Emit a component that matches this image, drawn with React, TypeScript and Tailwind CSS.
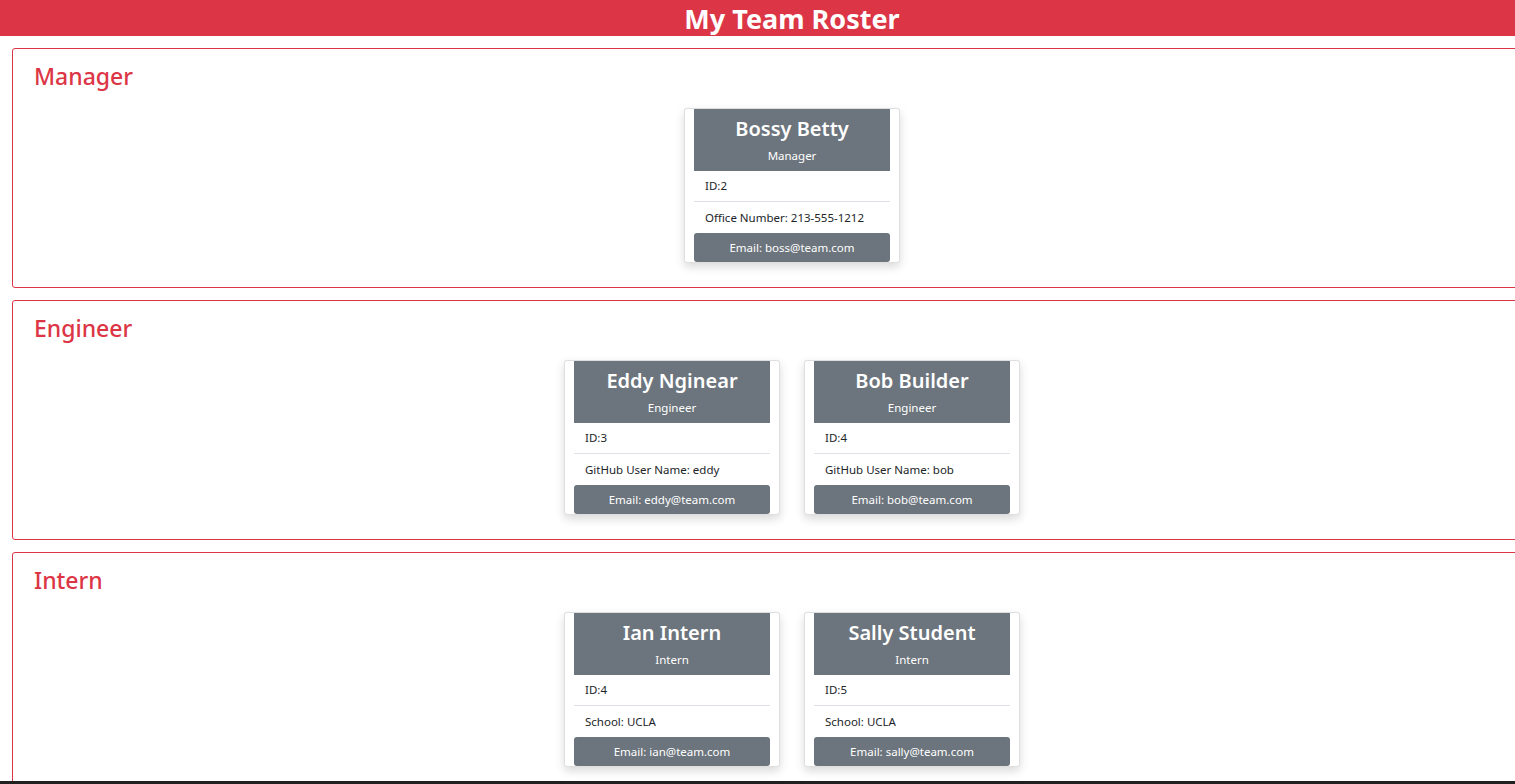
import React from "react";

type Member = { name: string; role: string; id: number; extra: string; email: string };

const sections: { title: string; members: Member[] }[] = [
  {
    title: "Manager",
    members: [{ name: "Bossy Betty", role: "Manager", id: 2, extra: "Office Number: 213-555-1212", email: "boss@team.com" }],
  },
  {
    title: "Engineer",
    members: [
      { name: "Eddy Nginear", role: "Engineer", id: 3, extra: "GitHub User Name: eddy", email: "eddy@team.com" },
      { name: "Bob Builder", role: "Engineer", id: 4, extra: "GitHub User Name: bob", email: "bob@team.com" },
    ],
  },
  {
    title: "Intern",
    members: [
      { name: "Ian Intern", role: "Intern", id: 4, extra: "School: UCLA", email: "ian@team.com" },
      { name: "Sally Student", role: "Intern", id: 5, extra: "School: UCLA", email: "sally@team.com" },
    ],
  },
];

function Card({ m }: { m: Member }) {
  return (
    <div className="w-[216px] bg-white border border-[rgba(0,0,0,0.125)] rounded-[3px] px-[9px] shadow-[0_4px_10px_rgba(0,0,0,0.15)]">
      <div className="bg-[#6c757d] h-[62px] flex flex-col items-center text-white">
        <div className="text-[20px] font-semibold leading-[26px] mt-[7px]">{m.name}</div>
        <div className="text-[11.5px] leading-[16px] mt-[6px]">{m.role}</div>
      </div>
      <div className="h-[31px] flex items-center pl-[11px] text-[11.5px] text-[#212529] border-b border-[#dee2e6]">ID:{m.id}</div>
      <div className="h-[31px] flex items-center pl-[11px] text-[11.5px] text-[#212529]">{m.extra}</div>
      <div className="h-[29px] bg-[#6c757d] rounded-[3px] flex items-center justify-center text-white text-[11.5px]">
        Email: {m.email}
      </div>
    </div>
  );
}

export default function App() {
  return (
    <div
      className="w-screen h-screen overflow-hidden bg-white"
      style={{ fontFamily: '"Segoe UI", "Noto Sans", "Open Sans", sans-serif' }}
    >
      <div className="w-[1584px]">
        <header className="h-[36px] bg-[#dc3545] flex items-center justify-center">
          <h1 className="text-white text-[27px] font-bold leading-none">My Team Roster</h1>
        </header>
        <div className="flex flex-col gap-[12px] mx-[12px] mt-[12px]">
          {sections.map((s) => (
            <section key={s.title} className="h-[240px] border border-[#dc3545] rounded-[3px] px-[21px] pt-[13px]">
              <h2 className="text-[#dc3545] text-[23px] leading-[29px] font-medium">{s.title}</h2>
              <div className="flex justify-center gap-[24px] mt-[17px]">
                {s.members.map((m) => (
                  <Card key={m.name} m={m} />
                ))}
              </div>
            </section>
          ))}
        </div>
      </div>
      <div className="fixed bottom-0 left-0 right-0 h-[3px] bg-[#202020]" />
    </div>
  );
}
